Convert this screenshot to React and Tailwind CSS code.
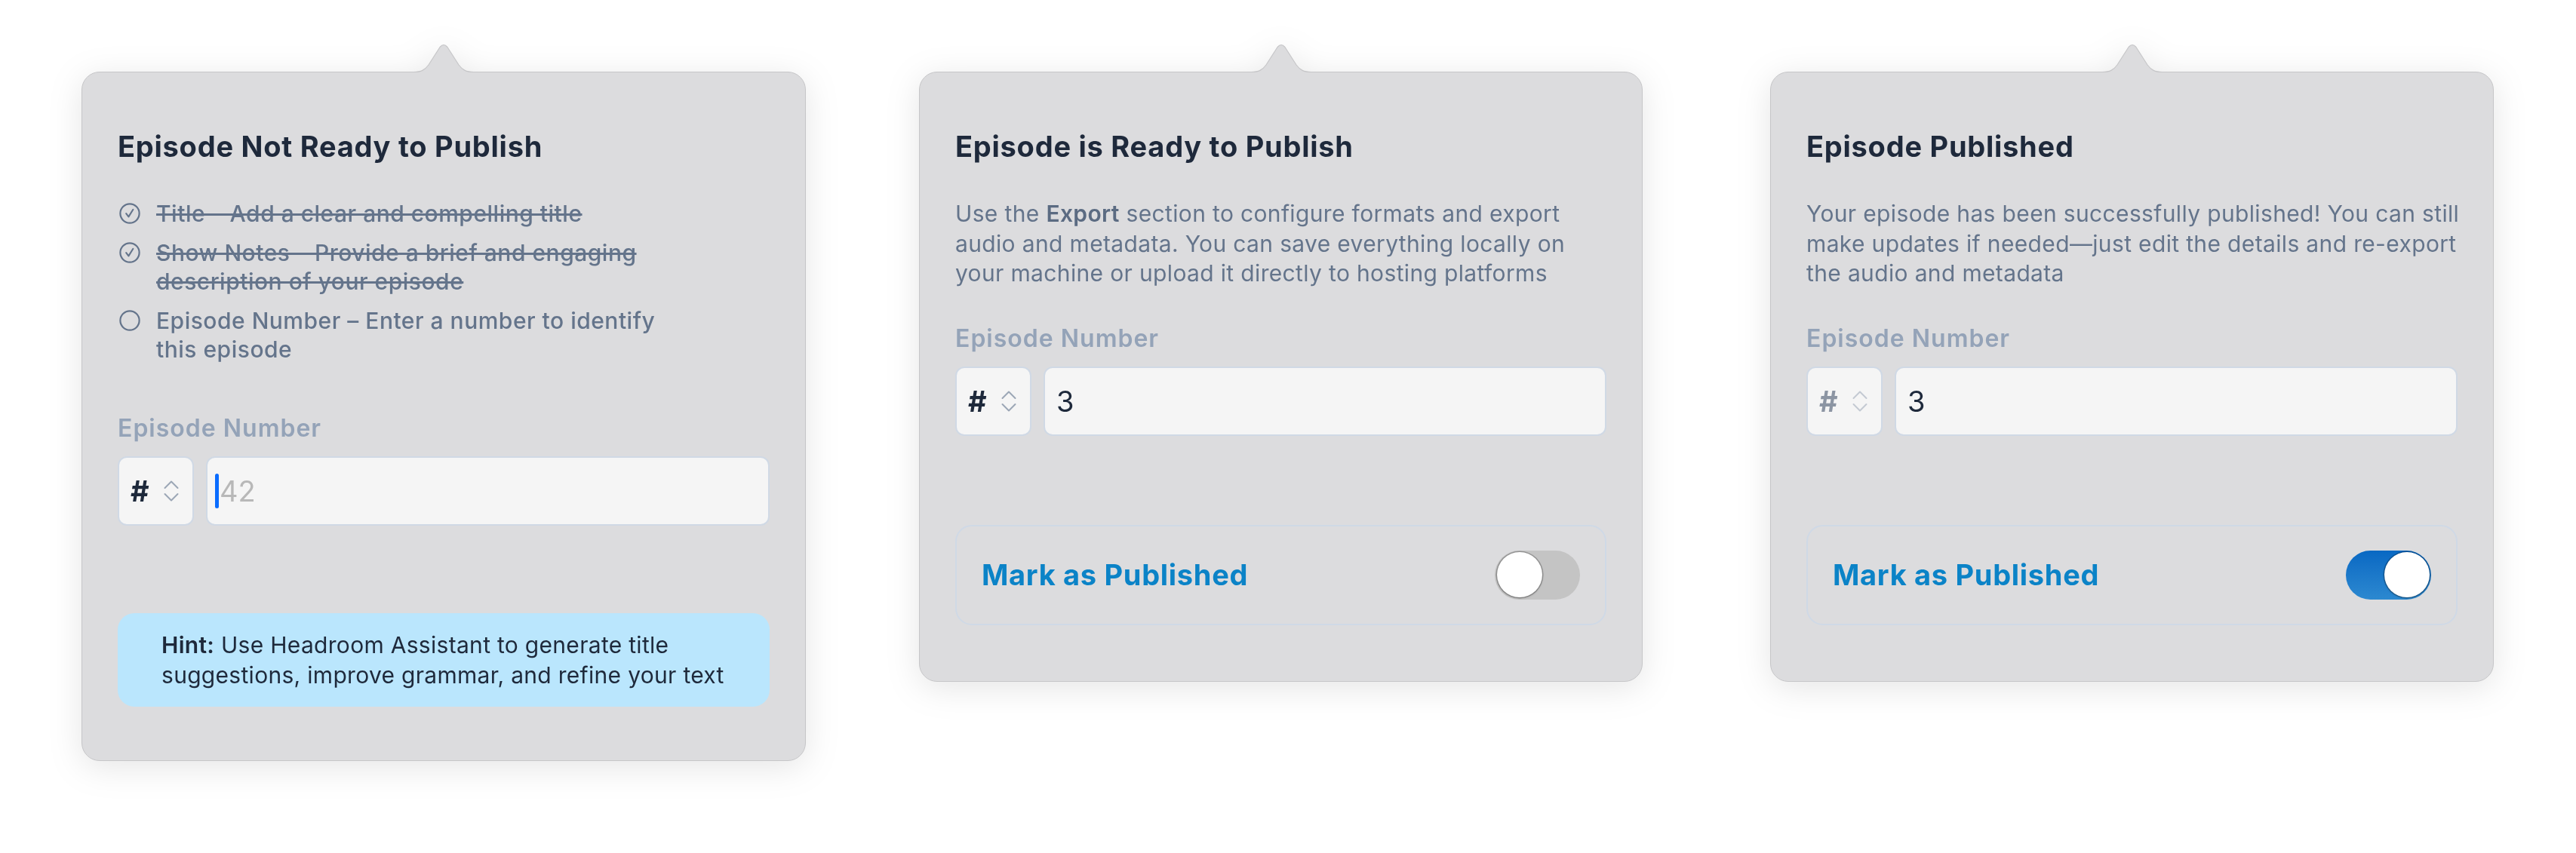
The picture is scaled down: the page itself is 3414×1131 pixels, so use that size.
import React from "react";

function Arrow() {
  return (
    <svg
      className="absolute left-1/2 -translate-x-1/2 top-0"
      width="80"
      height="40"
      viewBox="0 0 80 40"
    >
      <path
        d="M0 37.5 C10 37.5 15 35 20 28 L35 4.5 Q40 -1.5 45 4.5 L60 28 C65 35 70 37.5 80 37.5 L80 40 L0 40 Z"
        fill="#dcdcde"
      />
      <path
        d="M0 37.5 C10 37.5 15 35 20 28 L35 4.5 Q40 -1.5 45 4.5 L60 28 C65 35 70 37.5 80 37.5"
        fill="none"
        stroke="#c6c6c8"
        strokeWidth="1.2"
      />
    </svg>
  );
}

function Popover({ className, bodyClass, children }) {
  return (
    <div className={`relative shrink-0 pt-[37px] drop-shadow-[0_8px_22px_rgba(0,0,0,0.10)] ${className}`}>
      <div className={`rounded-[24px] bg-[#dcdcde] border border-[#c6c6c8] px-[47px] pt-[76px] ${bodyClass}`}>
        {children}
      </div>
      <Arrow />
    </div>
  );
}

function Title({ children }) {
  return (
    <h2 className="text-[38px] leading-[44px] font-bold text-[#1e293b] tracking-[0.75px] whitespace-nowrap">
      {children}
    </h2>
  );
}

function CheckIcon({ done }) {
  return (
    <svg width="32" height="32" viewBox="0 0 32 32" className="shrink-0 mt-[3px]">
      <circle cx="16" cy="16" r="12.6" fill="none" stroke="#64748b" strokeWidth="2.2" />
      {done && (
        <path d="M11.2 16.2 L14.4 20.4 L20.4 10.8" fill="none" stroke="#64748b" strokeWidth="2.1" strokeLinecap="round" strokeLinejoin="round" />
      )}
    </svg>
  );
}

function Chevrons({ color }) {
  return (
    <svg width="20" height="28" viewBox="0 0 20 28" className="shrink-0">
      <path d="M1.5 10 L10 1.5 L18.5 10" fill="none" stroke={color} strokeWidth="2" strokeLinecap="round" strokeLinejoin="round" />
      <path d="M1.5 18 L10 26.5 L18.5 18" fill="none" stroke={color} strokeWidth="2" strokeLinecap="round" strokeLinejoin="round" />
    </svg>
  );
}

function Label({ className }) {
  return (
    <div className={`text-[32px] leading-[40px] font-semibold text-[#94a3b8] tracking-[1px] ${className}`}>
      Episode Number
    </div>
  );
}

function NumberRow({ children, disabled }) {
  return (
    <div className="mt-[17px] flex gap-[16px] h-[92px]">
      <div className="w-[101px] shrink-0 rounded-[12px] border-2 border-[#d0d9e5] bg-[#f5f5f5] flex items-center pl-[15px] gap-[19px]">
        <span className={`text-[38px] leading-none font-bold ${disabled ? "text-[#8c95a3]" : "text-[#1e293b]"}`}>#</span>
        <Chevrons color={disabled ? "#c3c9d2" : "#9ba6b5"} />
      </div>
      <div className="flex-1 rounded-[12px] border-2 border-[#d0d9e5] bg-[#f5f5f5] flex items-center pl-[10px]">
        {children}
      </div>
    </div>
  );
}

function Toggle({ on }) {
  return (
    <div
      className={`w-[113px] h-[65px] rounded-full p-[2.5px] flex ${
        on ? "justify-end bg-linear-to-b from-[#0868c3] to-[#2c89d0]" : "justify-start bg-[#c4c4c4]"
      }`}
    >
      <div className="w-[60px] h-[60px] rounded-full bg-white shadow-[0_0_0_1.5px_rgba(0,0,0,0.22),0_1px_3px_rgba(0,0,0,0.25)]" />
    </div>
  );
}

function PublishCard({ on }) {
  return (
    <div className="mt-[118px] h-[133px] rounded-[22px] border-2 border-[#cfd9e6] flex items-center justify-between pl-[33px] pr-[33px]">
      <span className="text-[38px] font-bold text-[#0b83c7] tracking-[0.7px]">Mark as Published</span>
      <Toggle on={on} />
    </div>
  );
}

export default function App() {
  return (
    <div className="w-[3414px] h-[1131px] bg-white [font-family:Inter,sans-serif] flex items-start pl-[108px] pt-[58px] antialiased">
      {/* Panel 1 */}
      <Popover className="w-[960px]" bodyClass="pb-[71px]">
        <Title>Episode Not Ready to Publish</Title>
        <ul className="mt-[48px] flex flex-col gap-[14px] text-[30px] leading-[38px] font-medium text-[#64748b] tracking-[0.5px]">
          <li className="flex items-start gap-[19px]">
            <CheckIcon done />
            <span className="line-through decoration-[2.5px] whitespace-nowrap">Title – Add a clear and compelling title</span>
          </li>
          <li className="flex items-start gap-[19px]">
            <CheckIcon done />
            <span className="line-through decoration-[2.5px] whitespace-nowrap">
              Show Notes – Provide a brief and engaging
              <br />
              description of your episode
            </span>
          </li>
          <li className="flex items-start gap-[19px]">
            <CheckIcon />
            <span className="whitespace-nowrap">
              Episode Number – Enter a number to identify
              <br />
              this episode
            </span>
          </li>
        </ul>
        <Label className="mt-[66px]" />
        <NumberRow>
          <span className="w-[5px] h-[46px] rounded-full bg-[#0a6cff] shrink-0" />
          <span className="text-[38px] leading-none text-[#b8b8b8] ml-[1px]">42</span>
        </NumberRow>
        <div className="mt-[116px] rounded-[22px] bg-[#bae6fd] px-[58px] py-[22px] text-[30px] leading-[40px] text-[#1e293b] tracking-[0.3px] whitespace-nowrap">
          <span className="font-semibold">Hint:</span> Use Headroom Assistant to generate title
          <br />
          suggestions, improve grammar, and refine your text
        </div>
      </Popover>

      {/* Panel 2 */}
      <Popover className="w-[959px] ml-[150px]" bodyClass="pb-[74px]">
        <Title>Episode is Ready to Publish</Title>
        <p className="mt-[48px] text-[30px] leading-[39.5px] text-[#64748b] tracking-[0.35px] whitespace-nowrap">
          Use the <span className="font-semibold text-[#5b6b82]">Export</span> section to configure formats and export
          <br />
          audio and metadata. You can save everything locally on
          <br />
          your machine or upload it directly to hosting platforms
        </p>
        <Label className="mt-[46px]" />
        <NumberRow>
          <span className="text-[38px] leading-none text-[#1e293b] ml-[5px]">3</span>
        </NumberRow>
        <PublishCard on={false} />
      </Popover>

      {/* Panel 3 */}
      <Popover className="w-[959px] ml-[169px]" bodyClass="pb-[74px]">
        <Title>Episode Published</Title>
        <p className="mt-[48px] text-[30px] leading-[39.5px] text-[#64748b] tracking-[0.35px] whitespace-nowrap">
          Your episode has been successfully published! You can still
          <br />
          make updates if needed—just edit the details and re-export
          <br />
          the audio and metadata
        </p>
        <Label className="mt-[46px]" />
        <NumberRow disabled>
          <span className="text-[38px] leading-none text-[#1e293b] ml-[5px]">3</span>
        </NumberRow>
        <PublishCard on />
      </Popover>
    </div>
  );
}
